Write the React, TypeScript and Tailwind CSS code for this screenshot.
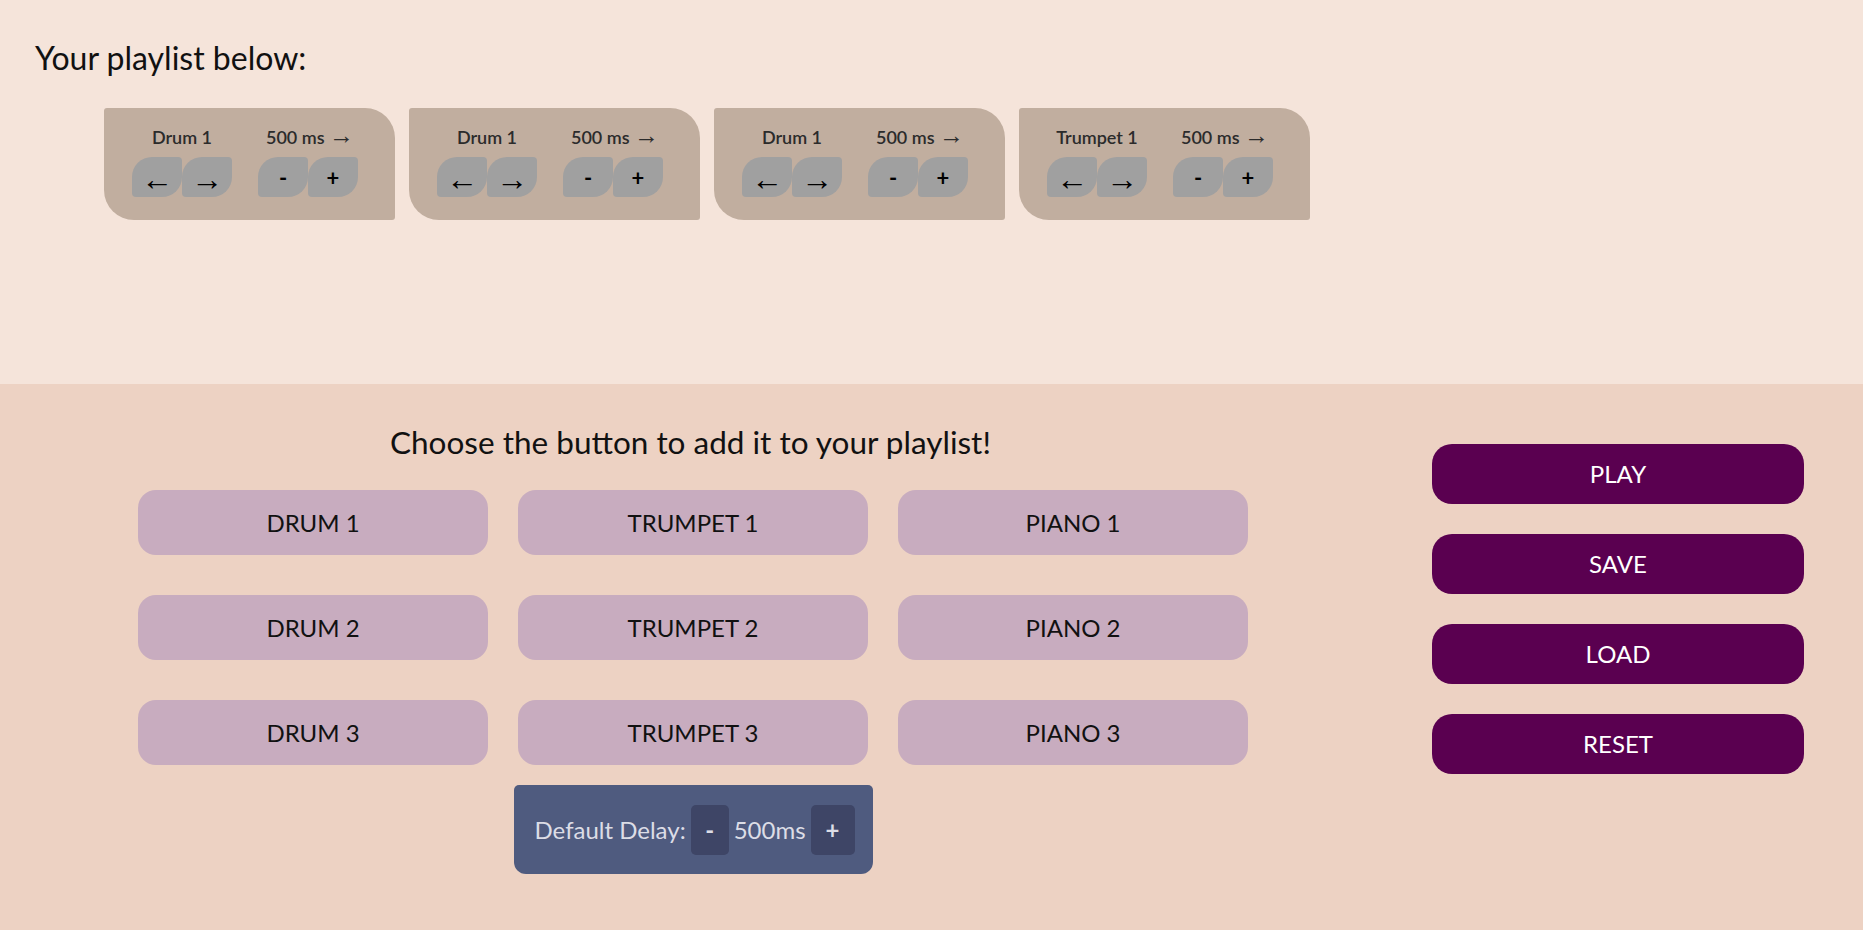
import React from 'react';

const playlist = [
  { name: 'Drum 1', delay: 500 },
  { name: 'Drum 1', delay: 500 },
  { name: 'Drum 1', delay: 500 },
  { name: 'Trumpet 1', delay: 500 },
];

const sounds = [
  'DRUM 1', 'TRUMPET 1', 'PIANO 1',
  'DRUM 2', 'TRUMPET 2', 'PIANO 2',
  'DRUM 3', 'TRUMPET 3', 'PIANO 3',
];

const controls = ['PLAY', 'SAVE', 'LOAD', 'RESET'];

const leaf =
  'w-[50px] h-[40px] bg-[#a0a0a0] rounded-tl-[20px] rounded-br-[20px] rounded-tr-[4px] rounded-bl-[4px] flex items-center justify-center text-black';

// thin arrows, as the original font renders them
const Arrow: React.FC<{ dir: 'left' | 'right'; className?: string }> = ({ dir, className = '' }) => (
  <span style={{ fontFamily: '"Liberation Serif", "DejaVu Serif", serif' }} className={`font-normal ${className}`}>
    {dir === 'left' ? '\u2190' : '\u2192'}
  </span>
);

const PlaylistCard: React.FC<{ name: string; delay: number }> = ({ name, delay }) => (
  <div className="w-[291px] h-[112px] bg-[#c1ae9f] rounded-tr-[30px] rounded-bl-[30px] rounded-tl-[3px] rounded-br-[3px] pl-[28px] pt-[17px] flex gap-[26px]">
    <div className="flex flex-col items-center w-[100px]">
      <span className="text-[18px] font-semibold text-[#2b2b2b] leading-[24px]">{name}</span>
      <div className="flex mt-[8px]">
        <button className={`${leaf} pt-[4px]`}><Arrow dir="left" className="text-[32px] leading-none" /></button>
        <button className={`${leaf} pt-[4px]`}><Arrow dir="right" className="text-[32px] leading-none" /></button>
      </div>
    </div>
    <div className="flex flex-col items-center w-[100px] pl-[4px]">
      <span className="text-[18px] font-semibold text-[#2b2b2b] leading-[24px] h-[24px] whitespace-nowrap">
        {delay} ms <Arrow dir="right" className="text-[25px] leading-[0]" />
      </span>
      <div className="flex mt-[8px] -ml-[4px]">
        <button className={`${leaf} text-[22px] font-bold`}>-</button>
        <button className={`${leaf} text-[22px] font-bold`}>+</button>
      </div>
    </div>
  </div>
);

export default function App() {
  return (
    <div className="min-h-[930px] flex flex-col" style={{ fontFamily: 'Lato, "Noto Sans", sans-serif' }}>
      {/* Playlist */}
      <section className="h-[384px] bg-[#f5e4da] pl-[35px] pt-[38px]">
        <h1 className="text-[32px] leading-[40px] text-[#111]">Your playlist below:</h1>
        <div className="flex gap-[14px] ml-[69px] mt-[30px]">
          {playlist.map((p, i) => (
            <PlaylistCard key={i} name={p.name} delay={p.delay} />
          ))}
        </div>
      </section>

      {/* Sound picker */}
      <section className="flex-1 bg-[#edd2c3] flex">
        <div className="pl-[138px] pt-[38px] w-[1432px]">
          <h2 className="text-[31.5px] leading-[40px] text-[#111] pl-[252px]">
            Choose the button to add it to your playlist!
          </h2>
          <div className="grid grid-cols-[350px_350px_350px] gap-x-[30px] gap-y-[40px] mt-[28px]">
            {sounds.map((s) => (
              <button
                key={s}
                className="h-[65px] rounded-[18px] bg-[#c8acbf] text-[24px] text-[#111]"
              >
                {s}
              </button>
            ))}
          </div>
          <div className="w-[1110px] flex justify-center mt-[20px]">
            <div className="w-[359px] h-[89px] bg-[#4f5b7f] rounded-t-[5px] rounded-b-[12px] flex items-center pl-[21px] text-[24px] text-[#dcdde6]">
              <span>Default Delay:</span>
              <button className="w-[38px] h-[50px] ml-[5px] rounded-[5px] bg-[#3e4566] font-bold">-</button>
              <span className="mx-[5px]">500ms</span>
              <button className="w-[44px] h-[50px] rounded-[5px] bg-[#3e4566] font-bold">+</button>
            </div>
          </div>
        </div>
        <div className="pt-[60px] flex flex-col gap-[30px]">
          {controls.map((c) => (
            <button
              key={c}
              className="w-[372px] h-[60px] rounded-[20px] bg-[#5a0050] text-white text-[24px]"
            >
              {c}
            </button>
          ))}
        </div>
      </section>
    </div>
  );
}
